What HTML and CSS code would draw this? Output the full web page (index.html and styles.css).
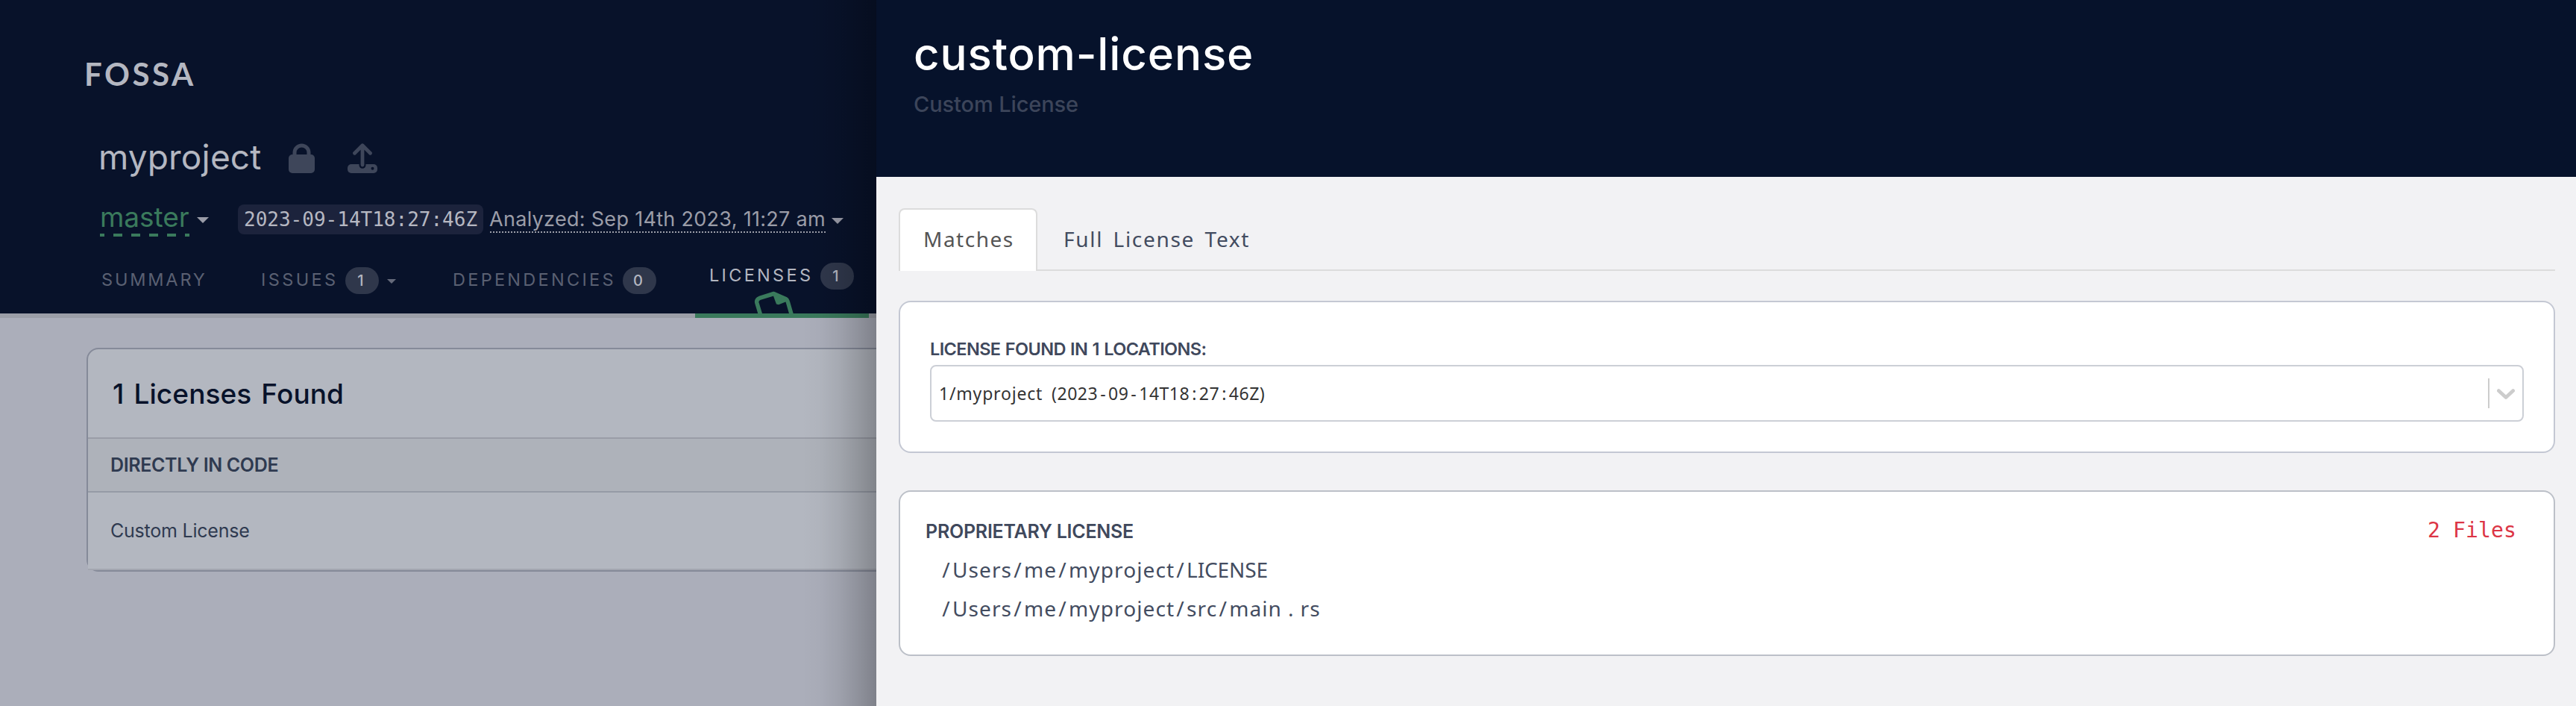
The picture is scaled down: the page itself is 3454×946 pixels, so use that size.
FILE: index.html
```html
<!DOCTYPE html>
<html lang="en">
<head>
<meta charset="utf-8">
<title>FOSSA - myproject licenses</title>
<link rel="stylesheet" href="styles.css">
</head>
<body>
<div class="app">
  <div class="project">
    <header class="topbar">
      <div class="logo">FOSSA</div>
      <div class="title-row">
        <h1 class="project-name">myproject</h1>
        <svg class="icon-lock" viewBox="0 0 35 40"><path d="M8 17V12.500a9.500 9.500 0 0 1 19 0V17" fill="none" stroke="#3e465a" stroke-width="5"/><rect y="15" width="35" height="25" rx="5" fill="#3e465a"/></svg>
        <svg class="icon-upload" viewBox="0 0 40 40"><rect y="28" width="40" height="12" rx="5" fill="#3e465a"/><path d="M20 14v15.300" fill="none" stroke="#08122a" stroke-width="9" stroke-linecap="round"/><path d="M20 3v26M9.500 13.200L20 2.800l10.500 10.400" fill="none" stroke="#3e465a" stroke-width="4.800" stroke-linecap="round" stroke-linejoin="round"/><circle cx="33.500" cy="33.700" r="2" fill="#08122a"/></svg>
      </div>
      <div class="version-row">
        <span class="branch">master</span>
        <i class="caret branch-caret"></i>
        <code class="revision">2023-09-14T18:27:46Z</code>
        <span class="analyzed">Analyzed: Sep 14th 2023, 11:27 am</span>
        <i class="caret analyzed-caret"></i>
      </div>
      <nav class="nav">
        <a class="nav-item"><span class="nav-label summary">SUMMARY</span></a>
        <a class="nav-item issues-item"><span class="nav-label issues">ISSUES</span><b class="badge">1</b><i class="caret small-caret"></i></a>
        <a class="nav-item deps-item"><span class="nav-label deps">DEPENDENCIES</span><b class="badge">0</b></a>
        <a class="nav-item active">
          <span class="active-line"><span class="nav-label licenses">LICENSES</span><b class="badge">1</b></span>
          <svg class="icon-doc" viewBox="0 0 60 30"><path d="M10 33L4.900 16Q3.700 11.500 8.500 9.400L27.500 3.500 43.500 10.500Q45.600 11.700 46.200 14L51.700 33" fill="none" stroke="#3a7a5c" stroke-width="5.500" stroke-linejoin="round"/><path d="M26 4l5 13.600 3 .6L47 13z" fill="#3a7a5c"/></svg>
        </a>
      </nav>
    </header>
    <div class="strip"><div class="strip-active"></div></div>
    <main class="content">
      <section class="found">
        <h2 class="found-title">1 Licenses Found</h2>
        <h3 class="found-group">DIRECTLY IN CODE</h3>
        <div class="found-row">Custom License</div>
      </section>
    </main>
  </div>
  <aside class="drawer">
    <header class="drawer-head">
      <h2 class="drawer-title">custom-license</h2>
      <p class="drawer-sub">Custom License</p>
    </header>
    <div class="drawer-body">
      <div class="tabs">
        <a class="tab tab-active">Matches</a>
        <a class="tab tab-rest">Full License Text</a>
      </div>
      <section class="card locations">
        <h3 class="card-label loc-label">LICENSE FOUND IN 1 LOCATIONS:</h3>
        <div class="select">
          <span class="select-value"><span class="select-name">1/myproject</span> (2023<i class="pad">-</i>09<i class="pad">-</i>14T18<i class="pad">:</i>27<i class="pad">:</i>46Z)</span>
          <span class="select-sep"></span>
          <svg class="chevron" viewBox="0 0 24 14"><path d="M2.300 2.500L12 11.500l9.700-9" fill="none" stroke="#ccc" stroke-width="4.600" stroke-linecap="round" stroke-linejoin="round"/></svg>
        </div>
      </section>
      <section class="card matches">
        <div class="match-head"><h3 class="card-label">PROPRIETARY LICENSE</h3><span class="count">2 Files</span></div>
        <div class="path"><i>/</i>Users<i>/</i>me<i>/</i>myproject<i>/</i><span class="caps">LICENSE</span></div>
        <div class="path"><i>/</i>Users<i>/</i>me<i>/</i>myproject<i>/</i>src<i>/</i>main<i class="dot">.</i>rs</div>
      </section>
    </div>
  </aside>
</div>
</body>
</html>
```
FILE: styles.css
```css
* { box-sizing: border-box; }
body { margin: 0; font-family: Inter, "Liberation Sans", sans-serif; }
h1, h2, h3, p { margin: 0; font-weight: 400; }
i { font-style: normal; }
svg { display: block; flex: none; }
.app { display: flex; width: 3454px; height: 946px; overflow: hidden; }

.project { position: relative; width: 1175px; flex: none; overflow: hidden; background: #abaeba; }
.project::after { content: ""; position: absolute; inset: 0 0 0 auto; width: 100px; background: linear-gradient(90deg, rgba(0,0,0,0), rgba(0,0,0,.02) 25%, rgba(0,0,0,.075) 50%, rgba(0,0,0,.16) 75%, rgba(0,0,0,.26)); }
.topbar { height: 420px; padding-top: 74px; background: #08122a; overflow: hidden; white-space: nowrap; }
.logo { padding-left: 113px; font: 700 42px/50px Lato, sans-serif; letter-spacing: 3.5px; color: #b4b7c1; }
.title-row { display: flex; margin-top: 61px; padding-left: 132px; }
.project-name { width: 255px; font-size: 46px; line-height: 50px; letter-spacing: .16px; color: #b4b7c1; }
.icon-lock { width: 35px; height: 40px; margin-top: 7px; }
.icon-upload { width: 40px; height: 40px; margin: 7px 0 0 44px; }

.version-row { display: flex; align-items: flex-start; height: 48px; margin-top: 35px; padding-left: 134px; }
.branch { width: 120px; height: 47px; font-size: 37px; line-height: 41px; letter-spacing: -.05px; color: #3a7a5c; background: repeating-linear-gradient(90deg, #3a7a5c 0 6px, transparent 6px 18px, #3a7a5c 18px 24px) 0 100% / 120px 4px no-repeat; }
.caret { flex: none; width: 16px; height: 8px; background: #9a9ca8; clip-path: polygon(0 0, 100% 0, 50% 100%); }
.branch-caret { margin: 21px 0 0 10px; }
.revision { width: 329px; height: 40px; margin: 4px 0 0 39px; padding-left: 8px; border-radius: 8px; background: #1c233c; font: 26px/40px "DejaVu Sans Mono", monospace; color: #b6b8c2; }
.analyzed { width: 451px; height: 39px; margin: 3px 0 0 8px; font-size: 27px; line-height: 41px; letter-spacing: .3px; color: #9b9da8; background: repeating-linear-gradient(90deg, transparent 0 1px, #9b9da8 1px 3px, transparent 3px 4px) 0 100% / 100% 2px no-repeat; }
.analyzed-caret { margin: 22px 0 0 8px; }

.nav { display: flex; margin-top: 40px; padding-left: 136px; }
.nav-item { display: flex; height: 62px; }
.nav-label { height: 36px; margin-top: -1px; font-size: 23.5px; line-height: 35px; color: #5a6072; }
.summary { width: 144px; letter-spacing: 2.83px; }
.issues { width: 113px; letter-spacing: 3.4px; }
.deps { width: 228px; letter-spacing: 3.28px; }
.licenses { width: 149px; letter-spacing: 3.3px; color: #b3b6c0; }
.issues-item { margin-left: 70px; }
.deps-item { margin-left: 76px; }
.badge { width: 45px; height: 36px; border-radius: 18px; background: #2f374b; font-size: 20px; font-weight: 500; line-height: 36px; letter-spacing: 3px; text-indent: -1px; text-align: center; color: #b3b6c0; }
.small-caret { width: 12px; height: 6px; margin: 16px 0 0 11px; background: #656a7b; }
.active { flex-direction: column; width: 233px; margin-left: 52px; margin-top: -6px; height: 68px; padding-left: 19px; }
.active-line { display: flex; height: 38px; }
.icon-doc { width: 60px; height: 30px; margin-left: 59px; }
.strip { height: 6px; padding-left: 932px; background: #9b9ea7; }
.strip-active { width: 233px; height: 6px; background: #3a7a5c; }

.content { padding: 40px 0 0 116px; }
.found { width: 1300px; height: 300px; border: 2px solid #858a99; border-radius: 16px; background: #b3b7c0; color: #2f3a50; }
.found-title { height: 120px; padding: 1px 0 0 33px; border-bottom: 2px solid #9a9da7; font-size: 37px; font-weight: 500; line-height: 117px; letter-spacing: .1px; word-spacing: 3px; color: #08122a; }
.found-group { height: 72px; padding-left: 30px; border-bottom: 2px solid #969ba6; background: #aeb2ba; font-size: 25px; font-weight: 600; line-height: 71px; letter-spacing: -.36px; }
.found-row { height: 104px; padding-left: 30px; border-bottom: 2px solid #a3a6b0; background: #b3b7c0; font-size: 25px; line-height: 102px; letter-spacing: -.22px; }

.drawer { flex: 1; background: #f2f2f4; }
.drawer-head { height: 237px; padding: 37px 0 0 50px; background: #06122b; }
.drawer-title { font-size: 60px; font-weight: 500; line-height: 70px; letter-spacing: .88px; color: #fff; }
.drawer-sub { margin-top: 15px; font-size: 29px; font-weight: 500; line-height: 36px; letter-spacing: -.11px; color: #3c455a; }
.drawer-body { padding: 42px 28px 0 30px; }
.tabs { display: flex; height: 84px; font: 28px/78px "Noto Sans", sans-serif; }
.tab { padding-top: 2px; }
.tab-active { width: 186px; padding: 0 0 0 31px; border: 2px solid #dcdcdc; border-bottom: 0; border-radius: 8px 8px 0 0; background: #fff; letter-spacing: 1.5px; color: #555; }
.tab-rest { flex: 1; padding-left: 35px; border-bottom: 2px solid #dcdcdc; letter-spacing: 1.7px; word-spacing: 4.5px; color: #434c60; }

.card { border: 2px solid #c4c8d3; border-radius: 16px; background: #fff; }
.card-label { font-size: 25px; font-weight: 600; line-height: 32px; letter-spacing: -.23px; color: #3f485c; }
.locations { height: 204px; margin-top: 40px; padding: 49px 40px 0; }
.loc-label { font-size: 23.5px; line-height: 28px; letter-spacing: -.6px; word-spacing: 1px; }
.select { display: flex; align-items: center; height: 76px; margin-top: 7px; padding: 0 10px; border: 2px solid #cccfd6; border-radius: 8px; }
.select-value { flex: 1; font: 23px/30px "Noto Sans", sans-serif; letter-spacing: .5px; word-spacing: 5.5px; color: #333; }
.select-name { letter-spacing: .8px; }
.pad { margin: 0 3px; }
.select-sep { width: 2px; height: 40px; background: #ccc; }
.chevron { width: 24px; height: 14px; margin-left: 10px; margin-top: 2px; }
.matches { height: 222px; margin-top: 50px; padding: 37px 50px 0 34px; border-color: #bcc0c8; }
.match-head { display: flex; justify-content: space-between; height: 41px; }
.count { font: 28px/30px "DejaVu Sans Mono", monospace; letter-spacing: .14px; color: #dc3545; }
.path { padding-left: 20px; font: 28px/52px "Noto Sans", sans-serif; letter-spacing: 1.1px; color: #434c60; }
.path i { margin: 0 2.2px; }
.path .dot { margin: 0 8px; }
.caps { letter-spacing: -.1px; }
```
